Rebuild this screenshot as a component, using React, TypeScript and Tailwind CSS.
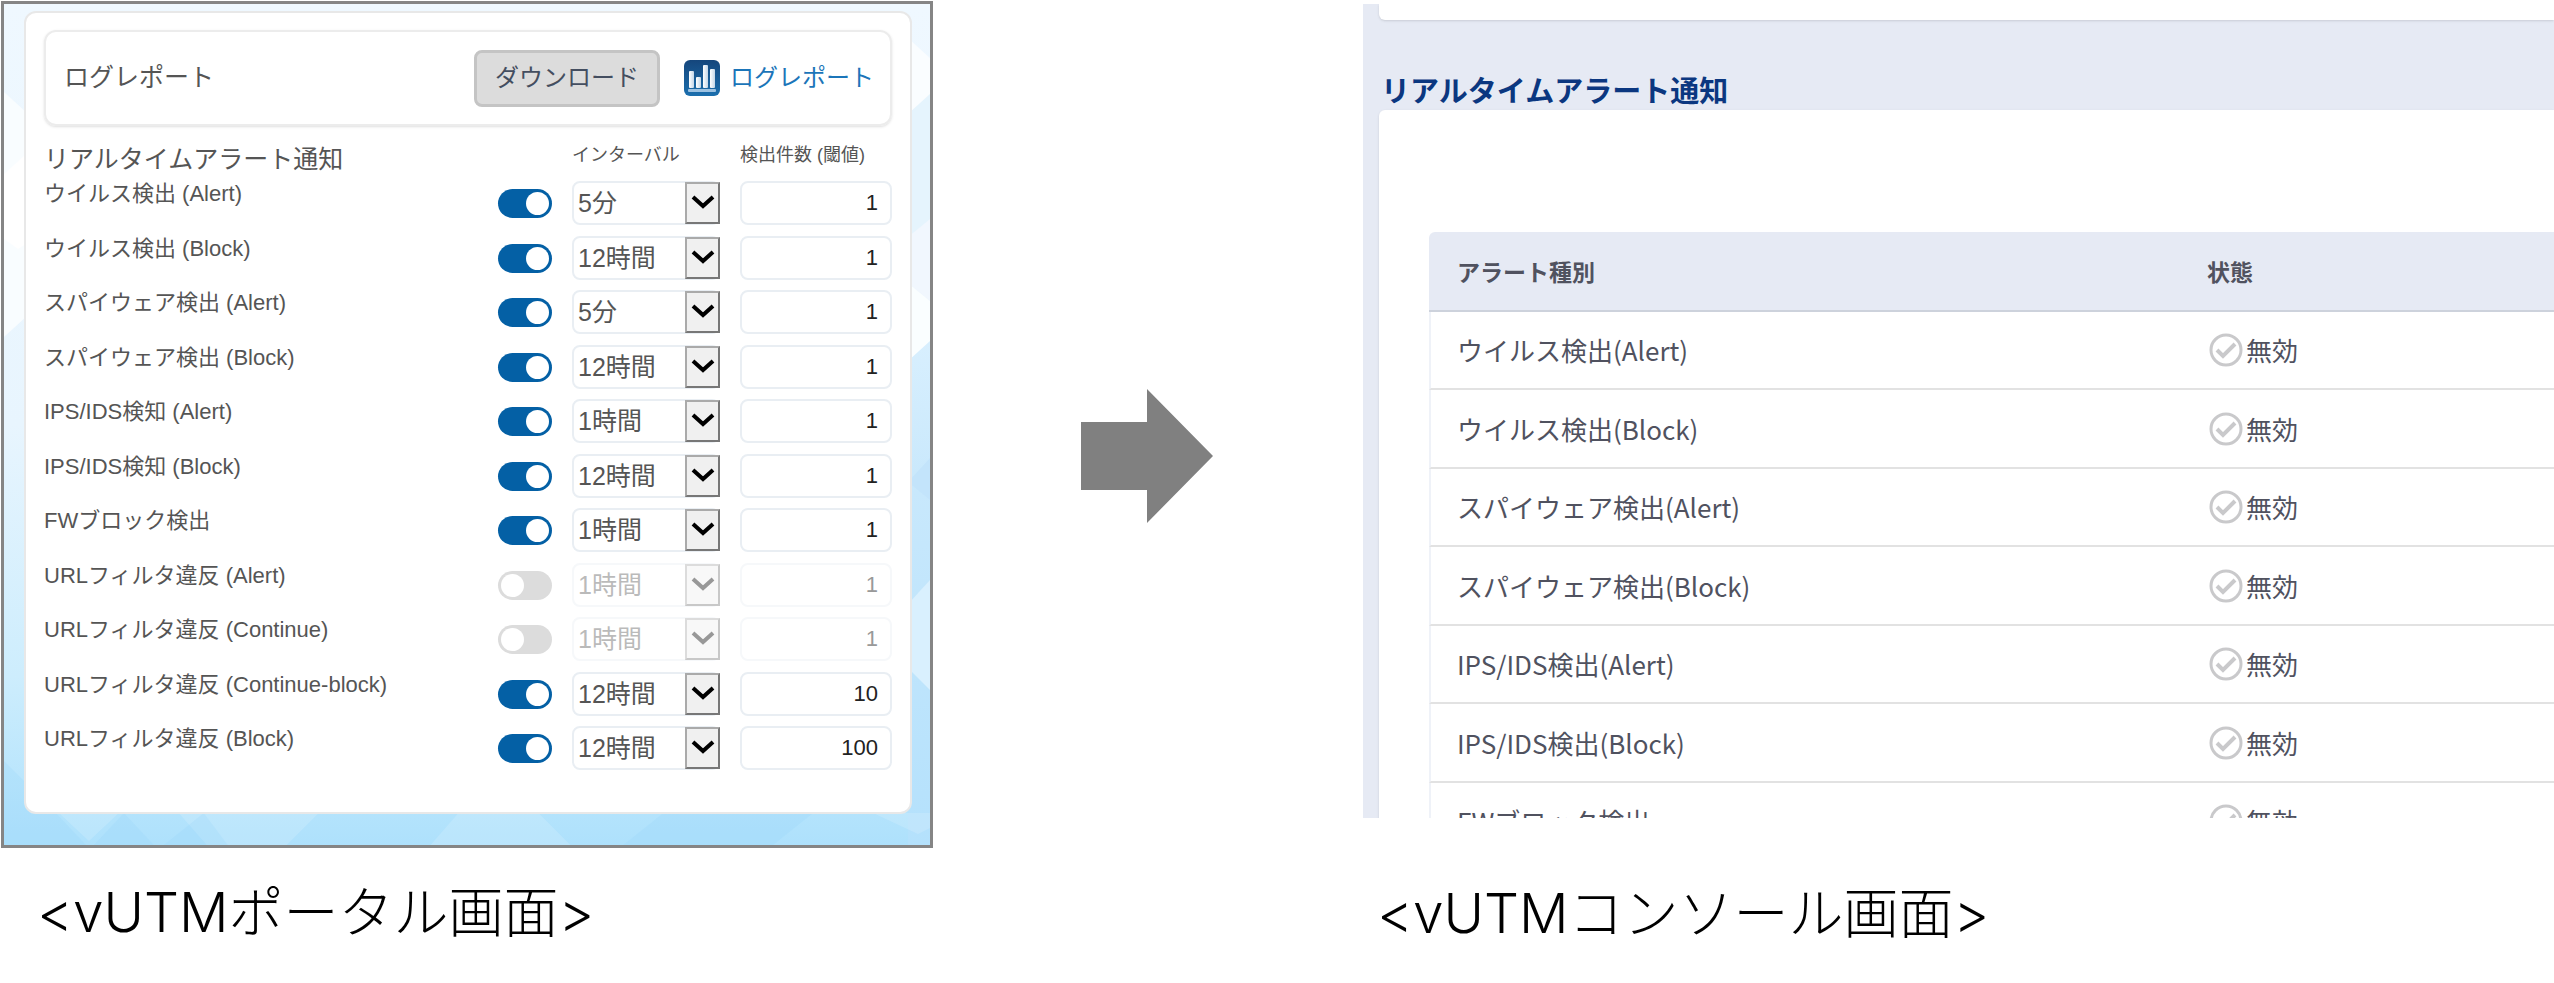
interface AlertSetting {
  id: string
  label: string
  enabled: boolean
  interval: string
  threshold: string
}

const settings: AlertSetting[] = [
  { id: 'virus-alert', label: 'ウイルス検出 (Alert)', enabled: true, interval: '5分', threshold: '1' },
  { id: 'virus-block', label: 'ウイルス検出 (Block)', enabled: true, interval: '12時間', threshold: '1' },
  { id: 'spyware-alert', label: 'スパイウェア検出 (Alert)', enabled: true, interval: '5分', threshold: '1' },
  { id: 'spyware-block', label: 'スパイウェア検出 (Block)', enabled: true, interval: '12時間', threshold: '1' },
  { id: 'ips-alert', label: 'IPS/IDS検知 (Alert)', enabled: true, interval: '1時間', threshold: '1' },
  { id: 'ips-block', label: 'IPS/IDS検知 (Block)', enabled: true, interval: '12時間', threshold: '1' },
  { id: 'fw-block', label: 'FWブロック検出', enabled: true, interval: '1時間', threshold: '1' },
  { id: 'url-alert', label: 'URLフィルタ違反 (Alert)', enabled: false, interval: '1時間', threshold: '1' },
  { id: 'url-continue', label: 'URLフィルタ違反 (Continue)', enabled: false, interval: '1時間', threshold: '1' },
  { id: 'url-continue-block', label: 'URLフィルタ違反 (Continue-block)', enabled: true, interval: '12時間', threshold: '10' },
  { id: 'url-block', label: 'URLフィルタ違反 (Block)', enabled: true, interval: '12時間', threshold: '100' },
]

const alertTypes = [
  'ウイルス検出(Alert)',
  'ウイルス検出(Block)',
  'スパイウェア検出(Alert)',
  'スパイウェア検出(Block)',
  'IPS/IDS検出(Alert)',
  'IPS/IDS検出(Block)',
  'FWブロック検出',
]

// Pale sky with overlapping facets, only its edges show around the card
function Backdrop() {
  return (
    <svg className="absolute inset-0 h-full w-full" viewBox="0 0 927 841" preserveAspectRatio="none" aria-hidden="true">
      <defs>
        <linearGradient id="sky" x1="0" y1="0" x2="0" y2="1">
          <stop offset="0" stopColor="#eff8ff" />
          <stop offset="0.5" stopColor="#e8f5fe" />
          <stop offset="0.8" stopColor="#cdedfd" />
          <stop offset="1" stopColor="#aee1fc" />
        </linearGradient>
        <linearGradient id="skyRight" x1="0" y1="0" x2="0" y2="1">
          <stop offset="0" stopColor="#d8effe" />
          <stop offset="0.3" stopColor="#c8e8fc" />
          <stop offset="1" stopColor="#b4e1fc" />
        </linearGradient>
      </defs>
      <rect width="927" height="841" fill="url(#sky)" />
      <path d="M0 88l22 20v205L0 333z" fill="#f9fdff" />
      <path d="M0 170l22-20v90l-8 5-14-10z" fill="#ffffff" />
      <path d="M905 34l22 20v38l-22 18z" fill="#fafdff" />
      <path d="M905 110l22-20v128l-22 15z" fill="#e5f4fd" />
      <path d="M905 233l22-18v82l-22-18z" fill="#f1f7fe" />
      <path d="M905 279l22 18v42l-22 18z" fill="#fafeff" />
      <path d="M905 357l22-20v504h-22z" fill="url(#skyRight)" />
      <path d="M905 478l22-24v42z" fill="#c3e4fb" />
      <path d="M905 600l22-24v110l-22-22z" fill="#d9f0fe" />
      <g fill="#ffffff" fillOpacity="0.15">
        <path d="M55 809h60l-30 28zM175 809h140l-32 32h-80zM455 809h80l32 32h-140zM870 809h57v15l-12 6z" />
      </g>
      <g fill="#8fd3fa" fillOpacity="0.2">
        <path d="M0 757l52 52 30 32H0zM120 809l30 32H90zM200 809l24 32h-64zM660 809h150l-40 32H620z" />
      </g>
    </svg>
  )
}

function ReportIcon() {
  return (
    <svg className="h-9 w-9" viewBox="0 0 36 36" aria-hidden="true">
      <defs>
        <linearGradient id="tile" x1="0" y1="0" x2="0" y2="1">
          <stop offset="0" stopColor="#15467c" />
          <stop offset="1" stopColor="#1b6fae" />
        </linearGradient>
        <linearGradient id="bar" x1="0" y1="0" x2="1" y2="0">
          <stop offset="0" stopColor="#ffffff" />
          <stop offset="1" stopColor="#c3d6e8" />
        </linearGradient>
      </defs>
      <rect width="36" height="36" rx="6" fill="url(#tile)" />
      <g fill="url(#bar)">
        <rect x="5" y="11" width="5" height="17" rx="1" />
        <rect x="12" y="17" width="5" height="11" rx="1" />
        <rect x="19" y="5" width="5" height="23" rx="1" />
        <rect x="26" y="9" width="5" height="19" rx="1" />
      </g>
      <rect x="4" y="29" width="28" height="3" rx="1" fill="#9cc2e2" />
    </svg>
  )
}

function StatusIcon() {
  return (
    <svg className="h-[34px] w-[34px]" viewBox="0 0 34 34" fill="none" stroke="#c9c9cb" strokeWidth="3" aria-hidden="true">
      <circle cx="17" cy="17" r="15" />
      <path d="M8 17l6 6 12-12" strokeWidth="4" />
    </svg>
  )
}

function SettingRow({ setting }: { setting: AlertSetting }) {
  const { id, label, enabled, interval, threshold } = setting
  return (
    <div className="grid grid-cols-[1fr_56px_148px_152px] items-start gap-x-5 odd:h-[55px] even:h-[54px]">
      <label htmlFor={id} className="text-[22px] leading-[26px] text-[#555]">
        {label}
      </label>
      <div className="flex h-11 items-center justify-end">
        <input
          id={id}
          type="checkbox"
          defaultChecked={enabled}
          className="h-[29px] w-[54px] appearance-none rounded-full bg-[#dcdcdc] p-[3px] before:block before:h-[23px] before:w-[23px] before:rounded-full before:bg-white checked:bg-[#0460a5] checked:before:ml-[25px]"
        />
      </div>
      <div className={enabled ? 'relative' : 'relative opacity-40'}>
        <select
          aria-label={`${label} インターバル`}
          defaultValue={interval}
          disabled={!enabled}
          className="h-11 w-full appearance-none rounded-lg border-2 border-[#e9eef3] bg-white pl-1 text-[25px] leading-8 text-[#555] opacity-100"
        >
          <option>5分</option>
          <option>1時間</option>
          <option>12時間</option>
        </select>
        <span className="pointer-events-none absolute inset-y-px right-0 flex w-[35px] items-center justify-center border-2 border-t-[#aaa] border-r-[#777] border-b-[#777] border-l-[#aaa] bg-[#f0f0f0]">
          <svg className="h-4 w-6" viewBox="0 0 24 16" aria-hidden="true">
            <path d="M2 2l10 9 10-9" fill="none" stroke="#000" strokeWidth="4" />
          </svg>
        </span>
      </div>
      <input
        type="text"
        aria-label={`${label} 検出件数`}
        defaultValue={threshold}
        disabled={!enabled}
        className="h-11 w-full rounded-lg border-2 border-[#e9eef3] bg-white pr-3 text-right text-[22px] text-[#222] disabled:border-[#f6f8fa] disabled:text-[#999]"
      />
    </div>
  )
}

function PortalScreen() {
  return (
    <section className="relative border-[3px] border-[#858585] pt-[7px] pr-[18px] pb-[31px] pl-5 font-['Liberation_Sans','Noto_Sans_CJK_JP',sans-serif]">
      <Backdrop />
      <div className="relative rounded-xl border-2 border-[#e8e8e8] bg-white px-[18px] pt-[17px] pb-[31px]">
        <div className="flex h-24 items-center rounded-xl border-2 border-[#ececec] pr-4 pl-[18px] shadow-sm">
          <span className="flex-1 text-[25px] text-[#555]">ログレポート</span>
          <button type="button" className="h-[57px] w-[186px] rounded-lg border-[3px] border-[#c4c4c4] bg-[#dcdcdc] text-2xl text-[#444e60]">
            ダウンロード
          </button>
          <a href="#report" className="ml-6 flex items-center gap-2.5 text-2xl text-[#1b75b9]">
            <ReportIcon />
            ログレポート
          </a>
        </div>
        <div className="mt-[15px] grid h-10 grid-cols-[1fr_148px_152px] gap-x-5 text-[#555]">
          <h2 className="text-[25px] leading-9">リアルタイムアラート通知</h2>
          <span className="text-lg">インターバル</span>
          <span className="text-lg">検出件数 (閾値)</span>
        </div>
        <div>
          {settings.map((setting) => (
            <SettingRow key={setting.id} setting={setting} />
          ))}
        </div>
      </div>
    </section>
  )
}

function ConsoleScreen() {
  return (
    <section className="h-[814px] overflow-hidden bg-[#e6eaf4] pl-4 text-[#50525f]">
      <div className="h-4 rounded-bl-md bg-white shadow-sm" />
      <h2 className="mt-12 pl-0.5 text-[29px] leading-[42px] font-bold text-[#0b3780]">リアルタイムアラート通知</h2>
      <div className="rounded-tl-md bg-white pt-[122px] pl-[50px] shadow-sm">
        <table className="w-full table-fixed border-separate border-spacing-0 text-left">
          <thead>
            <tr className="h-20 bg-[#e6eaf4] text-[23px]">
              <th className="w-[750px] rounded-tl-md border-b-2 border-[#cdd2dc] pl-7 font-bold">アラート種別</th>
              <th className="border-b-2 border-[#cdd2dc] pl-7 font-bold">状態</th>
            </tr>
          </thead>
          <tbody>
            {alertTypes.map((name) => (
              <tr key={name} className="text-[26px] leading-9 odd:h-[78px] even:h-[79px]">
                <td className="border-b-2 border-l-2 border-b-[#e2e2e2] border-l-[#eff2f8] pl-[26px]">{name}</td>
                <td className="border-b-2 border-[#e2e2e2] pl-[30px]">
                  <span className="flex items-center gap-[3px]">
                    <StatusIcon />
                    無効
                  </span>
                </td>
              </tr>
            ))}
          </tbody>
        </table>
      </div>
    </section>
  )
}

export default function App() {
  return (
    <main className="flex min-h-screen items-start overflow-hidden bg-white pt-px pl-px font-['Noto_Sans_CJK_JP',sans-serif]">
      <figure className="w-[932px] shrink-0">
        <PortalScreen />
        <figcaption className="mt-6 pl-9 font-['Inter','Noto_Sans_CJK_JP',sans-serif] text-[55px] leading-[80px] font-light text-black">
          {'<vUTMポータル画面>'}
        </figcaption>
      </figure>
      <svg className="mt-[388px] mr-[150px] ml-[148px] h-[134px] w-[132px] shrink-0" viewBox="0 0 132 134" aria-hidden="true">
        <path d="M0 33h66V0l66 67-66 67v-33H0z" fill="#808080" />
      </svg>
      <figure className="mt-[3px] min-w-0 flex-1">
        <ConsoleScreen />
        <figcaption className="mt-[55px] pl-3.5 font-['Inter','Noto_Sans_CJK_JP',sans-serif] text-[55px] leading-[80px] font-light text-black">
          {'<vUTMコンソール画面>'}
        </figcaption>
      </figure>
    </main>
  )
}
